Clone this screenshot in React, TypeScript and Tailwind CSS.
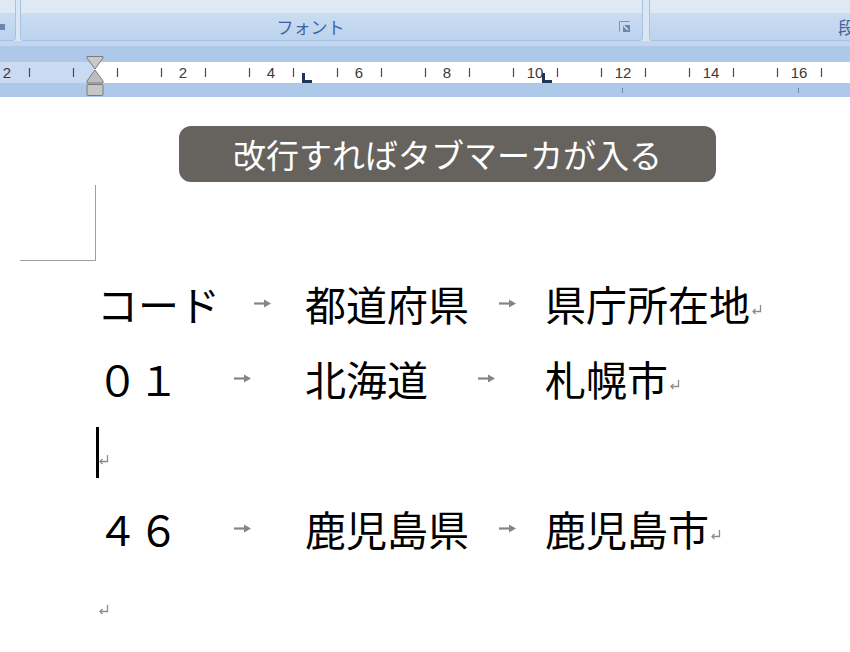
const jp = { fontFamily: '"Noto Sans CJK JP", "Noto Sans", sans-serif' };

const TabArrow = () => (
  <svg width="19" height="9" viewBox="0 0 19 9" className="shrink-0">
    <line x1="1" y1="4.5" x2="12" y2="4.5" stroke="#858585" strokeWidth="2.2" />
    <polygon points="11,0.5 18,4.5 11,8.5" fill="#858585" />
  </svg>
);

const ReturnMark = () => (
  <svg width="13" height="13" viewBox="0 0 13 13" className="mt-[11px] shrink-0">
    <path d="M10.5 2 V8.5 H3" fill="none" stroke="#8c8c8c" strokeWidth="1.3" />
    <path d="M5.5 6 L3 8.5 L5.5 11" fill="none" stroke="#8c8c8c" strokeWidth="1.3" />
  </svg>
);

const Launcher = () => (
  <svg width="13" height="13" viewBox="0 0 13 13">
    <path d="M1.5 11.5 V1.5 H11.5" fill="none" stroke="#7d93b2" strokeWidth="1" />
    <rect x="5" y="5" width="7" height="7" fill="#6b87ad" />
    <path d="M5.5 5.5 L10 10" stroke="#dfe9f6" strokeWidth="1.2" />
  </svg>
);

function Row({ a, b, c, end = true }: { a: string; b: string; c: string; end?: boolean }) {
  return (
    <div className="flex h-[75px] items-center">
      <div className="flex w-[208px] items-center">
        <span>{a}</span>
        <span className="flex flex-1 justify-center">
          <TabArrow />
        </span>
      </div>
      <div className="flex w-[240px] items-center">
        <span>{b}</span>
        <span className="flex flex-1 justify-center">
          <TabArrow />
        </span>
      </div>
      <span>{c}</span>
      {end && <ReturnMark />}
    </div>
  );
}

// ruler: origin at x=95, 44px per unit
const ticks = Array.from({ length: 19 }, (_, i) => 29 + i * 44);
const labels = [
  { x: 7, t: "2" },
  { x: 183, t: "2" },
  { x: 271, t: "4" },
  { x: 359, t: "6" },
  { x: 447, t: "8" },
  { x: 535, t: "10" },
  { x: 623, t: "12" },
  { x: 711, t: "14" },
  { x: 799, t: "16" },
];

function Ruler() {
  return (
    <div className="relative h-[51px] bg-[#aec8ea] pt-[16px]">
      <div className="flex h-[21px]">
        <div className="w-[95px] bg-[#c9daf1]" />
        <div className="flex-1 bg-white" />
      </div>
      <svg width="850" height="51" className="absolute left-0 top-0">
        {ticks.map((x) => (
          <line key={x} x1={x + 0.5} y1="22" x2={x + 0.5} y2="31" stroke="#4a4a4a" strokeWidth="1.2" />
        ))}
        {labels.map((l) => (
          <text
            key={l.x}
            x={l.x}
            y="32"
            textAnchor="middle"
            fontSize="15"
            fill="#3a3a3a"
            fontFamily="Liberation Sans, sans-serif"
          >
            {l.t}
          </text>
        ))}
        <line x1="622.5" y1="42" x2="622.5" y2="47" stroke="#6f86a8" />
        <line x1="798.5" y1="42" x2="798.5" y2="47" stroke="#6f86a8" />
        {/* tab stops */}
        {[302, 542].map((x) => (
          <path key={x} d={`M${x} 27 h3 v7 h7 v3 h-10 z`} fill="#1d3557" />
        ))}
        {/* indent markers */}
        <path d="M87 10.5 H103 V12 L95 23 L87 12 Z" fill="#c9c9c9" stroke="#7b7b7b" />
        <path d="M95 24 L103 35 V37 H87 V35 Z" fill="#bdbdbd" stroke="#7b7b7b" />
        <rect x="87" y="38.5" width="16" height="11" rx="1" fill="#c6c6c6" stroke="#7b7b7b" />
      </svg>
    </div>
  );
}

export default function App() {
  return (
    <div className="h-[652px] w-[850px] overflow-hidden bg-white" style={jp}>
      {/* ribbon */}
      <div className="flex h-[41px] bg-[#dbe6f4]">
        <div className="flex w-[16px] flex-col overflow-hidden rounded-br-[4px] border-b border-r border-[#a7c2e0]">
          <div className="h-[13px] bg-[#dfe9f5]" />
          <div className="flex flex-1 items-center bg-gradient-to-b from-[#cadcf1] to-[#bcd3ee]">
            <div className="h-[6px] w-[5px] bg-[#6b87ad]" />
          </div>
        </div>
        <div className="ml-[4px] flex w-[623px] flex-col overflow-hidden rounded-b-[4px] border-x border-b border-[#a7c2e0]">
          <div className="h-[13px] bg-[#dfe9f5]" />
          <div className="relative flex flex-1 items-center justify-center bg-gradient-to-b from-[#cadcf1] to-[#bcd3ee] pr-[42px]">
            <span className="text-[17px] leading-none text-[#3d63a6]">フォント</span>
            <div className="absolute right-[11px] top-[7px]">
              <Launcher />
            </div>
          </div>
        </div>
        <div className="ml-[6px] flex flex-1 flex-col overflow-hidden rounded-bl-[4px] border-b border-l border-[#a7c2e0]">
          <div className="h-[13px] bg-[#dfe9f5]" />
          <div className="flex flex-1 items-center bg-gradient-to-b from-[#cadcf1] to-[#bcd3ee]">
            <span className="ml-[188px] whitespace-nowrap text-[17px] leading-none text-[#3d63a6]">段落</span>
          </div>
        </div>
      </div>
      <div className="h-[5px] bg-[#c3d6ee]" />
      <Ruler />

      {/* page */}
      <div className="pt-[29px]">
        <div className="ml-[179px] flex h-[56px] w-[537px] items-center justify-center rounded-[12px] bg-[#66635f]">
          <span className="text-[33px] leading-none text-white">改行すればタブマーカが入る</span>
        </div>
        <div className="ml-[20px] mt-[3px] h-[76px] w-[76px] border-b border-r border-[#9f9f9f]" />
        <div className="ml-[97px] mt-[5px] text-[41px] leading-none text-black">
          <Row a="コード" b="都道府県" c="県庁所在地" />
          <Row a="０１" b="北海道" c="札幌市" />
          <div className="relative flex h-[75px] items-center">
            <div className="absolute left-[-1px] top-[11px] h-[51px] w-[3px] bg-black" />
            <ReturnMark />
          </div>
          <Row a="４６" b="鹿児島県" c="鹿児島市" />
          <div className="flex h-[75px] items-center">
            <ReturnMark />
          </div>
        </div>
      </div>
    </div>
  );
}
